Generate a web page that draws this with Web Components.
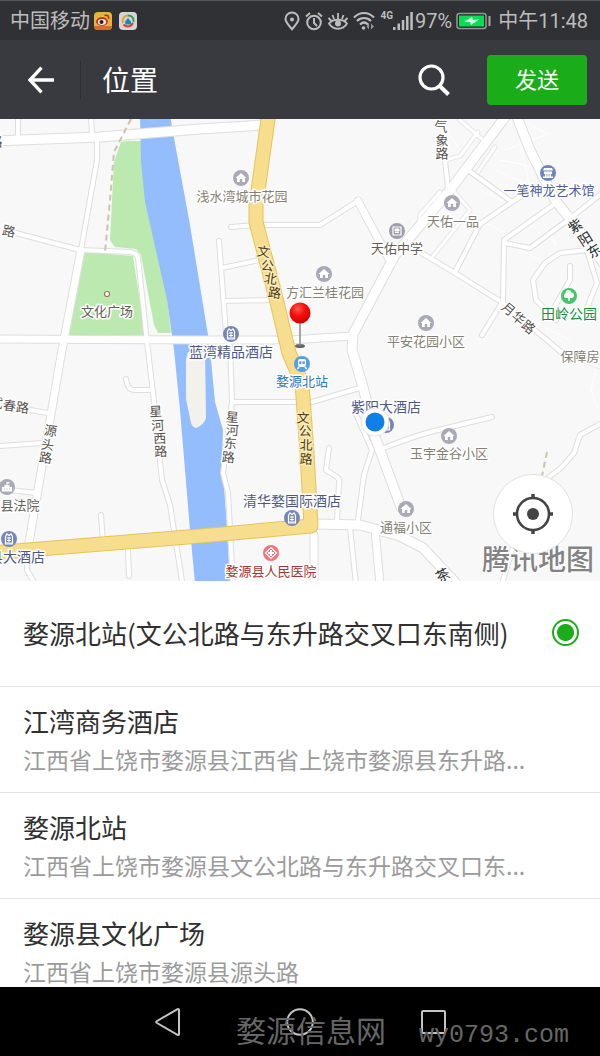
<!DOCTYPE html>
<html lang="zh-CN">
<head>
<meta charset="utf-8">
<meta name="viewport" content="width=device-width, initial-scale=1">
<title>位置</title>
<style>
    body {
        margin: 0;
        background: #000;
        font-family: Roboto, "Noto Sans CJK SC", sans-serif;
    }
</style>
</head>
<body>
<location-page></location-page>

<script>
//Iconos
const ICONS = {
    pin: { w: 16, svg: `<g fill="none" stroke="currentColor" stroke-width="2"><path d="M8 20.300C4 15.500 1.500 13 1.500 10a6.500 6.500 0 0 1 13 0c0 3-2.500 5.500-6.500 10.300z"/></g><circle cx="8" cy="10.500" r="2" fill="currentColor"/>` },
    alarm: { w: 18, svg: `<g fill="none" stroke="currentColor" stroke-width="2"><circle cx="9" cy="13.500" r="6.800"/><path d="M9 9v5l3 3M1 7.500l4-3.500M17 7.500L13 4"/></g>` },
    eye: { w: 20, svg: `<g fill="none" stroke="currentColor" stroke-width="1.800"><path d="M1 14.500C5 9.500 15 9.500 19 14.500C15 21.500 5 21.500 1 14.500z"/><path d="M10 4v6M4.500 6l1.500 4M15.500 6L14 10M.5 9l3 3M19.500 9l-3 3"/></g><circle cx="10" cy="14.500" r="3" fill="currentColor"/>` },
    wifi: { w: 22, svg: `<g fill="none" stroke="currentColor" stroke-width="2.200"><path d="M1 8.500C7 2.500 15 2.500 21 8.500M4 12c4-4 10-4 14 0M7 15.500c2.500-2.500 5.500-2.500 8 0"/></g><circle cx="10.500" cy="19" r="1.800" fill="currentColor"/><path d="M16 14v6.500l-2.500-3zM18 14.500v6l3-3z" fill="currentColor" opacity=".7"/>` },
    signal: { w: 20, svg: `<path d="M0 18h2.500v3H0zM4.500 14.500H7V21H4.500zM8.800 11h2.500v10H8.800zM13 7h2.500v14H13zM17.300 3h2.500v18h-2.500z" fill="currentColor"/>` },
    battery: { w: 35, svg: `<rect x="1" y="4.500" width="29" height="15" rx="2.500" fill="#222" stroke="#999" stroke-width="1.500"/><rect x="3" y="6.500" width="25" height="11" fill="#0bdc58"/><path d="M8 12.500l8-4.500 1 3 6-.5-8 5.500-1-3z" fill="#d5ffe0"/><path d="M33.500 7v10" stroke="#aaa" stroke-width="2"/>` },
    weibo: { w: 18, svg: `<rect y="3" width="18" height="18" rx="4" fill="#e4b53a"/><path d="M0 17h18a4 4 0 0 1-4 4H4a4 4 0 0 1-4-4z" fill="#dc6a2c"/><ellipse cx="8" cy="12.500" rx="5.800" ry="4.300" fill="#c8201c"/><ellipse cx="8" cy="13" rx="4.200" ry="3" fill="#eee"/><circle cx="7.500" cy="13" r="2" fill="#222"/><path d="M10.500 6.500c3-1 5 .8 4 3.500" fill="none" stroke="#c8201c" stroke-width="1.500"/>` },
    video: { w: 18, svg: `<rect y="3" width="18" height="18" rx="4" fill="#d6d6d6"/><g fill="none" stroke-width="2"><path d="M4 14A5.500 5.500 0 0 1 8 6.500" stroke="#e0a32c"/><path d="M8.500 6.500c5-.2 6.500 3 6 6.500" stroke="#2fa14c"/><path d="M14 14c-2 4-6.500 4.500-9.500 1.500" stroke="#dc3c2c"/></g><path d="M9 9l3 3.500v3H6.500l-.5-3z" fill="#2483c2"/>` },
    back: { w: 26, svg: `<path d="M26 12H2M13.500-.3L2 12l11.500 12.300" fill="none" stroke="currentColor" stroke-width="3.400"/>` },
    search: { w: 32, svg: `<circle cx="13.500" cy="9.500" r="11.500" fill="none" stroke="currentColor" stroke-width="3.200"/><path d="M21.500 17.800l9 8.700" stroke="currentColor" stroke-width="4"/>` },
    locate: { w: 40, svg: `<circle cx="20" cy="12" r="16" fill="none" stroke="currentColor" stroke-width="2.600"/><circle cx="20" cy="12" r="6" fill="currentColor"/><path d="M20-8v5M20 27v5M0 12h5M35 12h5" stroke="currentColor" stroke-width="3.500"/>` },
    navBack: { w: 28, svg: `<path d="M26 0v24q0 1.500-1.500.8L4 13q-1.500-1 0-2L24.500-.8Q26-1.500 26 0z" fill="none" stroke="currentColor" stroke-width="2"/>` },
    navHome: { w: 28, svg: `<circle cx="14" cy="12" r="12.800" fill="none" stroke="currentColor" stroke-width="2"/>` },
    navRecent: { w: 28, svg: `<rect x="3" y="1" width="23" height="22" rx="1" fill="none" stroke="currentColor" stroke-width="2"/>` }
};

class UiIcon extends HTMLElement {
    connectedCallback() {
        const icon = ICONS[this.getAttribute('name')];
        const shadowRoot = this.attachShadow({ mode: 'open' });
        shadowRoot.innerHTML = `
            <style>
                :host { display: block; flex: none; }
                svg { display: block; overflow: visible; }
            </style>
            <svg width="${icon.w}" height="24" viewBox="0 0 ${icon.w} 24" aria-hidden="true">${icon.svg}</svg>
        `;
    }
}
customElements.define('ui-icon', UiIcon);


//Barra de estado
class StatusBar extends HTMLElement {
    connectedCallback() {
        const shadowRoot = this.attachShadow({ mode: 'open' });
        shadowRoot.innerHTML = `
            <style>
                :host {
                    display: flex;
                    align-items: center;
                    justify-content: space-between;
                    box-sizing: border-box;
                    height: 40px;
                    padding: 0 12px 0 10px;
                    border-top: 1px solid #56575a;
                    background: #303134;
                    color: #bdbdbd;
                    font-size: 20px;
                    line-height: 24px;
                    white-space: nowrap;
                }
                .group { display: flex; align-items: center; }
                .apps { gap: 7px; margin-left: 4px; }
                .icons { gap: 5px; }
                .net { display: flex; align-items: flex-start; }
                small { font-size: 10px; line-height: 14px; font-weight: bold; }
                .battery { margin: 0 7px 0 4px; }
                .level { margin-left: 2px; }
            </style>
            <div class="group">
                <span>中国移动</span>
                <div class="group apps">
                    <ui-icon name="weibo"></ui-icon>
                    <ui-icon name="video"></ui-icon>
                </div>
            </div>
            <div class="group">
                <div class="group icons">
                    <ui-icon name="pin"></ui-icon>
                    <ui-icon name="alarm"></ui-icon>
                    <ui-icon name="eye"></ui-icon>
                    <ui-icon name="wifi"></ui-icon>
                    <div class="net"><small>4G</small><ui-icon name="signal"></ui-icon></div>
                </div>
                <span class="level">97%</span>
                <ui-icon class="battery" name="battery"></ui-icon>
                <span>中午11:48</span>
            </div>
        `;
    }
}
customElements.define('status-bar', StatusBar);


//Cabecera
class AppHeader extends HTMLElement {
    connectedCallback() {
        const shadowRoot = this.attachShadow({ mode: 'open' });
        shadowRoot.innerHTML = `
            <style>
                :host {
                    display: flex;
                    align-items: center;
                    box-sizing: border-box;
                    height: 79px;
                    padding-right: 13px;
                    background: #393a3f;
                    color: #fff;
                }
                button {
                    border: 0;
                    padding: 0;
                    background: none;
                    color: inherit;
                    font: inherit;
                    cursor: pointer;
                }
                .back {
                    padding: 7px 26px 7px 28px;
                    border-right: 1px solid #2d2e32;
                }
                h1 {
                    flex: 1;
                    margin: 0 0 0 21px;
                    padding-top: 4px;
                    font-size: 28px;
                    line-height: 40px;
                    font-weight: normal;
                }
                .search { margin-right: 37px; }
                .send {
                    width: 100px;
                    height: 50px;
                    padding-bottom: 4px;
                    border-radius: 4px;
                    background: #1aad19;
                    font-size: 22px;
                }
            </style>
            <button class="back" aria-label="返回"><ui-icon name="back"></ui-icon></button>
            <h1><slot></slot></h1>
            <button class="search" aria-label="搜索"><ui-icon name="search"></ui-icon></button>
            <button class="send">发送</button>
        `;
    }
}
customElements.define('app-header', AppHeader);


//Mapa
//type, x, y of the icon, then label, x, y of the label, class
const POIS = [
    ['house', 241, 178, '浅水湾城市花园', 242, 196, 'home'],
    ['house', 324, 274, '方汇兰桂花园', 325, 292, 'home'],
    ['house', 452, 203, '天佑一品', 453, 221, 'home'],
    ['school', 397, 231, '天佑中学', 397, 248, 'civic'],
    ['house', 426, 323, '平安花园小区', 426, 341, 'home'],
    ['house', 449, 436, '玉宇金谷小区', 449, 453, 'home'],
    ['house', 406, 509, '通福小区', 406, 527, 'home'],
    ['court', 7, 487, '县法院', 20, 505, 'civic'],
    ['hotel', 231, 334, '蓝湾精品酒店', 231, 352, 'hotel'],
    ['hotel', 386, 425, '紫阳大酒店', 386, 407, 'hotel'],
    ['hotel', 292, 518, '清华婺国际酒店', 292, 501, 'hotel'],
    ['hotel', 9, 539, '县大酒店', 17, 557, 'hotel'],
    ['museum', 548, 173, '一笔神龙艺术馆', 549, 190, 'museum'],
    ['station', 302, 364, '婺源北站', 302, 381, 'station'],
    ['hospital', 271, 553, '婺源县人民医院', 271, 571, 'hospital'],
    ['park', 569, 296, '田岭公园', 569, 314, 'park'],
    ['dot', 107, 294, '文化广场', 107, 311, 'civic'],
    ['', 0, 0, '保障房', 580, 356, 'home']
];

//name, centre x of each character, centre y of each character, rotation, class
const STREETS = [
    ['文公北路', [263, 267, 270, 274], [252, 266, 279, 293], 8, 'main'],
    ['文公北路', [303, 305, 306, 306], [418, 431, 445, 459], 2, 'main'],
    ['星河西路', [156, 158, 160, 161], [412, 426, 439, 452], -3, ''],
    ['星河东路', [232, 232, 230, 228], [417, 430, 443, 457], 4, ''],
    ['源头路', [50, 47, 45], [431, 445, 458], 8, ''],
    ['气象路', [441, 442, 442], [126, 140, 153], 0, ''],
    ['月华路', [505, 515, 525], [308, 317, 326], 40, ''],
    ['紫阳东', [578, 588, 597], [226, 239, 251], -32, 'dark'],
    ['武春路', [-4, 9, 22], [403, 406, 408], 7, ''],
    ['路', [8], [231], 12, ''],
    ['路', [-4], [141], 0, ''],
    ['茶', [445], [575], -28, 'dark']
];

//rotate turns a glyph round its start point, so shift it back to its centre
function streetText([name, xs, ys, angle, cls]) {
    const half = 6.5;
    const rad = angle * Math.PI / 180;
    const x = xs.map((v) => Math.round(v + half * (1 - Math.cos(rad)))).join(' ');
    const y = ys.map((v) => Math.round(v - half * Math.sin(rad))).join(' ');
    return `<text class="street ${cls}" x="${x}" y="${y}" rotate="${angle}">${name}</text>`;
}

class PlaceMap extends HTMLElement {
    connectedCallback() {
        const pois = POIS.map(([type, x, y, label, tx, ty, cls]) => `
            ${type ? `<use href="#${type}" x="${x}" y="${y}"/>` : ''}
            <text class="${cls}" x="${tx}" y="${ty}">${label}</text>`).join('');
        const streets = STREETS.map(streetText).join('');
        const shadowRoot = this.attachShadow({ mode: 'open' });
        shadowRoot.innerHTML = `
            <style>
                :host { display: block; flex: none; position: relative; overflow: hidden; background: #f8f8f8; }
                svg.map { display: block; width: 100%; height: auto; }
                .lines { fill: none; stroke-linecap: round; stroke-linejoin: round; }
                text {
                    font-size: 13px;
                    text-anchor: middle;
                    dominant-baseline: central;
                    stroke: #fff;
                    stroke-width: 3px;
                    stroke-linejoin: round;
                    paint-order: stroke;
                    fill: #6b675e;
                }
                .home { fill: #858071; }
                .civic { fill: #645d57; }
                .hotel { fill: #4c5986; font-size: 14px; }
                .museum { fill: #4c5f9c; }
                .station { fill: #2775c4; }
                .hospital { fill: #a5352f; }
                .park { fill: #159038; font-size: 14px; }
                .street { fill: #55504c; }
                .street.main { fill: #4c3a10; stroke: #faeab8; }
                .street.dark { fill: #28282a; font-size: 14px; }
                .brand {
                    font-size: 28px;
                    font-weight: 500;
                    fill: #777;
                    stroke-width: 2px;
                    opacity: .9;
                }
                button {
                    position: absolute;
                    right: 27px;
                    bottom: 27px;
                    width: 80px;
                    height: 80px;
                    padding: 0 20px;
                    border: 1px solid #e2e2e2;
                    box-sizing: border-box;
                    border-radius: 50%;
                    background: #fff;
                    color: #444;
                    display: flex;
                    align-items: center;
                    justify-content: center;
                    cursor: pointer;
                }
            </style>
            <svg class="map" viewBox="0 119 600 462" role="img" aria-label="地图">
                <defs>
                    <radialGradient id="ball" cx=".4" cy=".3" r=".7">
                        <stop offset="0" stop-color="#ff5a50"/>
                        <stop offset=".5" stop-color="#f50d0d"/>
                        <stop offset="1" stop-color="#d80000"/>
                    </radialGradient>
                    <g id="house"><circle r="8" fill="#a9aab6"/><path d="M0-5L5.500 0H4v4H1.200V1h-2.400v3H-4V0h-1.500z" fill="#fff"/></g>
                    <g id="school"><circle r="8" fill="#9d9faa"/><path d="M-4-4h8v8h-8z" fill="none" stroke="#fff" stroke-width="1.200"/><path d="M-2-2h4v2h-4zM-2 1.500h4" stroke="#fff" fill="#fff"/></g>
                    <g id="court"><circle r="8" fill="#a9aab6"/><path d="M-5 4.500V0h2.500v-2h2v-3h3v1.500H.5V-2h2v2H5v4.500z" fill="#fff"/><path d="M-3 2h1M-.5 2h1M2 2h1" stroke="#a9aab6"/></g>
                    <g id="hotel"><circle r="8" fill="#7787b5"/><path d="M-3.500 5v-7.500L-2-5l2 1.500L2-5l1.500 2.500V5z" fill="none" stroke="#fff" stroke-width="1.200"/><path d="M-2-1h4M-2 1.500h4M0-2v5M-3 4h6" stroke="#fff"/></g>
                    <g id="museum"><circle r="8" fill="#6f86bf"/><path d="M-5-2.500L-4-5h8l1 2.500zM-4-1.500h8V1h-8zM-3 1h1.500v3H-3zM-.7 1H.7v3H-.7zM1.500 1H3v3H1.500zM-5 3.500H5V5H-5z" fill="#fff"/></g>
                    <g id="station"><circle r="8" fill="#539ee9"/><rect x="-4" y="-5" width="8" height="8" rx="2" fill="#fff"/><path d="M-2.800-2.800h2.300V0h-2.300zM.5-2.800h2.300V0H.5z" fill="#539ee9"/><path d="M-3 3l-1.500 2M3 3l1.500 2" stroke="#fff" stroke-width="1.300"/></g>
                    <g id="hospital"><circle r="8" fill="#ec767b"/><path d="M0-5.500L5.500 0 0 5.500-5.500 0z" fill="none" stroke="#fff" stroke-width="1.200"/><path d="M0-3v6M-3 0h6" stroke="#fff" stroke-width="2"/></g>
                    <g id="park"><circle r="8" fill="#45c46c"/><path d="M-.8 5V2H-3a2.300 2.300 0 0 1-.5-4.500A3 3 0 0 1 2.500-3.500 2.800 2.800 0 0 1 3 2H.8v3z" fill="#fff"/></g>
                    <g id="dot"><circle r="2.500" fill="#fff" stroke="#9b7450" stroke-width="1.200"/></g>

                    <g id="lanes">
                        <path d="M460 120l23 20M445 160l15-4 18-24M440 192l-20 23-1 7M450 187l20 23-37 46M495 147l-17 25"/>
                        <path d="M562 352l38 15"/>
                    </g>
                    <g id="narrow">
                        <path d="M18 115v23M91 115l1 21M97 140v20L81 250M12 232l68 18 50 2q7 1 8 6l8 75 9 77 7 70 8 25 12 76"/>
                        <path d="M231 227l26-2h63l38-24M219 241l7 92M222 268l42-9M225 301l47-1"/>
                        <path d="M230 345l2 57-9 71 5 20 5 92M234 402h66M312 402l51-15M329 448l-3 22 11 7q3 2 2 6l-2 38"/>
                        <path d="M355 412l17 38-8 25-6 45M384 448q30-12 50-17l58-14M101 515l2 28M128 550l1 26"/>
                        <path d="M24 409l24 4M0 446l42-3M10 490l26 3M126 379q2 11 8 11h18M27 555v15l8 14"/>
                        <path d="M445 160l3 28M602 193l-30 24-42 31-26-5-1 58-21 34M504 240l52-37M468 170l44 32-32 22-25 48M512 202l16-10"/>
                        <path d="M410 246l45 27 48 30 58 49M587 250l-27 3-15 10-12 17 3 20 20 20M587 250l10 33-12 30M570 266v14l-16 28"/>
                        <path d="M602 423l-22 12-6 18-12 14-18 14M512 550l-10 34M350 528l6 56"/>
                    </g>
                    <g id="mid">
                        <path d="M-5 339l205 1h75M290 340l62-4M81 250L62 350 28 548M358 201l32 60M375 530l5 54M314 535v50"/>
                    </g>
                    <g id="wide">
                        <path d="M-5 141l105-4 100-8 62-4M353 334l42-79 55-65 68-90M353 334l-1 16 11 37 12 50 26 70"/>
                        <path d="M515 112l15 38 25 50 20 25 30 40M316 524l44 1 40 11 23 12 32 34"/>
                    </g>
                    <path id="avenue" d="M269 112L256 205v17l20 76 13 55 13 30 5 70 4 73L200 536-8 553"/>
                </defs>

                <path d="M127 141h14l4 46 20 93 6 53h-13l-4-8-13-70-5-6-21-2-5-7 4-78 7-20z" fill="#bce9b0"/>
                <path d="M83 252l50 4 12 79H69z" fill="#bce9b0"/>
                <path d="M140 115h30l4 23 16 87 18 110 3 25 4 42 8 28-1 30 5 67 3 56h-35l-5-53-10-120-6-60-7-50-22-98-4-40z" fill="#94bdfd"/>
                <path d="M188 352h17l1 66q-2 7-10 10-4-1-5-5l-5-24v-40z" fill="#f3f1eb"/>

                <g fill="none" stroke="#fff" stroke-width="1">
                    <path d="M505 150l40-15M500 160l40 8M495 170l40 18M520 140l10 50M500 240l40 20M540 215l16 30M470 215l40 20M480 190l30 15M510 310l60 30M530 125l20 10M440 120l20 30M596 370l-5 20 8 20"/>
                </g>
                <g class="lines">
                    <use href="#lanes" stroke="#e6e6e6" stroke-width="5"/>
                    <use href="#narrow" stroke="#dedede" stroke-width="6"/>
                    <use href="#mid" stroke="#dedede" stroke-width="9"/>
                    <use href="#wide" stroke="#dedede" stroke-width="11"/>
                    <use href="#lanes" stroke="#fff" stroke-width="3"/>
                    <use href="#narrow" stroke="#fff" stroke-width="4"/>
                    <use href="#mid" stroke="#fff" stroke-width="7"/>
                    <use href="#wide" stroke="#fff" stroke-width="9"/>
                    <use href="#avenue" stroke="#e6c454" stroke-width="15"/>
                    <use href="#avenue" stroke="#f7de8e" stroke-width="13"/>
                </g>
                <path d="M131 119l-17 33-4 48-5 52M547 452l-5 24" fill="none" stroke="#cdc4b0" stroke-width="2" stroke-dasharray="6 4"/>

                ${streets}
                ${pois}

                <circle cx="375" cy="422" r="14" fill="#fff" stroke="#e4e4e4"/>
                <circle cx="375" cy="422" r="9.500" fill="#1180e6"/>
                <ellipse cx="300" cy="346" rx="5" ry="2" fill="#666"/>
                <path d="M300 322v24" stroke="#8a8a8a" stroke-width="1.500"/>
                <circle cx="300" cy="313" r="10.500" fill="url(#ball)"/>
                <text class="brand" x="538" y="560">腾讯地图</text>
            </svg>
            <button aria-label="定位"><ui-icon name="locate"></ui-icon></button>
        `;
    }
}
customElements.define('place-map', PlaceMap);


//Elemento de la lista
class PlaceItem extends HTMLElement {
    connectedCallback() {
        const shadowRoot = this.attachShadow({ mode: 'open' });
        shadowRoot.innerHTML = `
            <style>
                :host {
                    display: block;
                    border-bottom: 1px solid #e3e3e3;
                    font-family: "Noto Sans CJK SC", sans-serif;
                }
                label {
                    display: flex;
                    align-items: center;
                    box-sizing: border-box;
                    min-height: 105px;
                    padding: 0 21px 2px 23px;
                    cursor: pointer;
                }
                .text { flex: 1; min-width: 0; }
                .name {
                    display: block;
                    color: #303030;
                    font-size: 26px;
                    line-height: 40px;
                    white-space: nowrap;
                }
                ::slotted([slot="address"]) {
                    display: block;
                    color: #9b9b9b;
                    font-size: 23px;
                    line-height: 36px;
                    white-space: nowrap;
                }
                input {
                    appearance: none;
                    flex: none;
                    box-sizing: border-box;
                    width: 27px;
                    height: 27px;
                    margin: 0;
                    border-radius: 50%;
                }
                input:checked {
                    border: 2px solid #1aad19;
                    background: radial-gradient(circle, #1aad19 8px, #fff 9px);
                }
            </style>
            <label>
                <span class="text">
                    <span class="name"><slot></slot></span>
                    <slot name="address"></slot>
                </span>
                <input type="radio" name="place">
            </label>
        `;
        this.input = shadowRoot.querySelector('input');
        this.input.checked = this.hasAttribute('selected');
        this.input.addEventListener('change', () => {
            this.dispatchEvent(new CustomEvent('place-select', { bubbles: true }));
        });
    }
}
customElements.define('place-item', PlaceItem);


//Lista de lugares
class PlaceList extends HTMLElement {
    connectedCallback() {
        const shadowRoot = this.attachShadow({ mode: 'open' });
        shadowRoot.innerHTML = `
            <style>
                :host {
                    display: block;
                    flex: 1;
                    min-height: 0;
                    overflow-y: auto;
                    scrollbar-width: none;
                    background: #fff;
                }
            </style>
            <slot></slot>
        `;
        //each radio lives in its own shadow root, so clear the others here
        this.addEventListener('place-select', (e) => {
            this.querySelectorAll('place-item').forEach((item) => {
                if (item !== e.target) item.input.checked = false;
            });
        });
    }
}
customElements.define('place-list', PlaceList);


//Barra de navegacion
class NavBar extends HTMLElement {
    connectedCallback() {
        const shadowRoot = this.attachShadow({ mode: 'open' });
        shadowRoot.innerHTML = `
            <style>
                :host {
                    display: block;
                    flex: none;
                    position: relative;
                    background: #000;
                    color: #c4c4c4;
                }
                nav {
                    display: flex;
                    align-items: center;
                    justify-content: center;
                    gap: 105px;
                    height: 69px;
                }
                button {
                    padding: 0;
                    border: 0;
                    background: none;
                    color: inherit;
                }
                .mark {
                    position: absolute;
                    right: 31px;
                    bottom: 0;
                    display: flex;
                    align-items: baseline;
                    gap: 33px;
                    color: #666;
                    font-size: 30px;
                    line-height: 40px;
                    white-space: nowrap;
                    pointer-events: none;
                }
                .site { font-family: "Liberation Mono", monospace; font-size: 25px; }
            </style>
            <div class="mark"><span>婺源信息网</span><span class="site">wy0793.com</span></div>
            <nav>
                <button aria-label="返回"><ui-icon name="navBack"></ui-icon></button>
                <button aria-label="主页"><ui-icon name="navHome"></ui-icon></button>
                <button aria-label="最近任务"><ui-icon name="navRecent"></ui-icon></button>
            </nav>
        `;
    }
}
customElements.define('nav-bar', NavBar);


//Pagina
class LocationPage extends HTMLElement {
    connectedCallback() {
        const shadowRoot = this.attachShadow({ mode: 'open' });
        shadowRoot.innerHTML = `
            <style>
                :host { display: flex; flex-direction: column; height: 100vh; }
                status-bar, app-header { flex: none; }
            </style>
            <status-bar></status-bar>
            <app-header>位置</app-header>
            <place-map></place-map>
            <place-list>
                <place-item selected>婺源北站(文公北路与东升路交叉口东南侧)</place-item>
                <place-item>江湾商务酒店<span slot="address">江西省上饶市婺源县江西省上饶市婺源县东升路...</span></place-item>
                <place-item>婺源北站<span slot="address">江西省上饶市婺源县文公北路与东升路交叉口东...</span></place-item>
                <place-item>婺源县文化广场<span slot="address">江西省上饶市婺源县源头路</span></place-item>
            </place-list>
            <nav-bar></nav-bar>
        `;
    }
}
customElements.define('location-page', LocationPage);
</script>
</body>
</html>
